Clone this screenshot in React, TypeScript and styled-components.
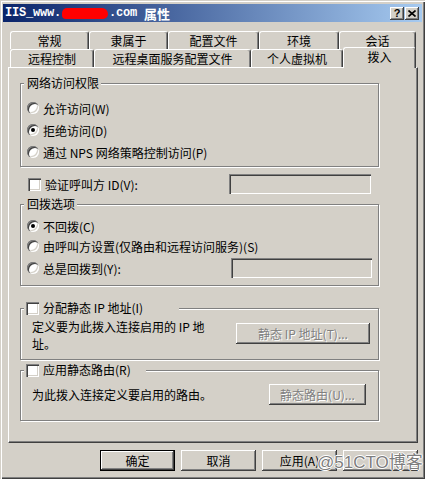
import React from "react";
import styled, { createGlobalStyle } from "styled-components";

const GlobalStyle = createGlobalStyle`
  html, body {
    margin: 0;
    padding: 0;
    background: #d4d0c8;
  }
  body {
    font-family: "Noto Sans CJK SC", "Liberation Sans", sans-serif;
    font-size: 12px;
    color: #000;
  }
  * {
    box-sizing: border-box;
  }
`;

const Window = styled.div`
  width: 425px;
  height: 479px;
  background: #d4d0c8;
  padding: 4px 3px 3px 3px;
  display: flex;
  flex-direction: column;
  box-shadow: inset 1px 1px 0 #d4d0c8, inset 2px 2px 0 #fff,
    inset -1px -1px 0 #404040, inset -2px -2px 0 #808080;
`;

const TitleBar = styled.div`
  height: 18px;
  display: flex;
  align-items: center;
  padding: 0 3px 0 2px;
  background: linear-gradient(to right, #0a246a, #a6caf0);
  color: #fff;
  font-weight: bold;
`;

const TitleText = styled.div`
  flex: 1;
  display: flex;
  align-items: center;
  font-family: "Liberation Mono", "Noto Sans CJK SC", monospace;
  font-size: 12px;
  letter-spacing: -0.2px;
  white-space: pre;
`;

const TitleCjk = styled.span`
  font-family: "Noto Sans CJK SC", sans-serif;
  font-size: 13px;
  letter-spacing: 0;
`;

const Redacted = styled.span`
  display: inline-block;
  width: 46px;
  height: 11px;
  margin: 0 1px;
  background: #ff0000;
  border-radius: 5px 6px 5px 4px;
`;

const CaptionButton = styled.div<{ $gap?: number }>`
  width: 14px;
  height: 13px;
  margin-left: ${(p) => p.$gap ?? 0}px;
  display: flex;
  align-items: center;
  justify-content: center;
  background: #d4d0c8;
  color: #000;
  font: bold 11px "Liberation Sans", sans-serif;
  box-shadow: inset -1px -1px 0 #404040, inset 1px 1px 0 #fff,
    inset -2px -2px 0 #808080;
`;

const TabStrip = styled.div`
  margin: 9px 0 0 7px;
  display: flex;
  flex-direction: column;
`;

const TabRow = styled.div`
  height: 18px;
  display: flex;
  align-items: flex-end;
`;

const Tab = styled.div<{ $w: number; $active?: boolean }>`
  width: ${(p) => p.$w}px;
  height: ${(p) => (p.$active ? 21 : 18)}px;
  margin-bottom: ${(p) => (p.$active ? -1 : 0)}px;
  position: ${(p) => (p.$active ? "relative" : "static")};
  z-index: ${(p) => (p.$active ? 1 : "auto")};
  display: flex;
  align-items: ${(p) => (p.$active ? "flex-start" : "center")};
  padding-top: ${(p) => (p.$active ? 2 : 0)}px;
  justify-content: center;
  background: #d4d0c8;
  border-top: 1px solid #fff;
  border-left: 1px solid #fff;
  border-right: 1px solid #404040;
  border-radius: 3px 3px 0 0;
  box-shadow: inset -1px 0 0 #808080;
  line-height: 14px;
`;

const Panel = styled.div`
  width: 410px;
  height: 376px;
  margin-left: 5px;
  padding-left: 11px;
  border-top: 1px solid #fff;
  border-left: 1px solid #fff;
  border-right: 1px solid #404040;
  border-bottom: 1px solid #404040;
  box-shadow: inset -1px -1px 0 #808080;
  display: flex;
  flex-direction: column;
`;

const Group = styled.div<{ $top: number; $h: number }>`
  width: 359px;
  height: ${(p) => p.$h}px;
  margin-top: ${(p) => p.$top}px;
  border: 1px solid #808080;
  box-shadow: 1px 1px 0 #fff, inset 1px 1px 0 #fff;
  display: flex;
  flex-direction: column;
`;

const Legend = styled.div<{ $w?: number; $pl?: number }>`
  align-self: flex-start;
  height: 14px;
  margin: -8px 0 0 3px;
  padding: 0 2px 0 ${(p) => p.$pl ?? 3}px;
  width: ${(p) => (p.$w ? `${p.$w}px` : "auto")};
  display: flex;
  align-items: center;
  gap: 4px;
  background: #d4d0c8;
  line-height: 14px;
`;

const OptionRow = styled.div<{ $top?: number; $h: number }>`
  height: ${(p) => p.$h}px;
  margin-top: ${(p) => p.$top ?? 0}px;
  padding: 0 6px 0 6px;
  display: flex;
  align-items: center;
  gap: 4px;
`;

const Label = styled.span`
  flex: 1;
  white-space: nowrap;
`;

const Radio = styled.span<{ $on?: boolean }>`
  width: 12px;
  height: 12px;
  flex: none;
  border-radius: 50%;
  background: #fff;
  display: flex;
  align-items: center;
  justify-content: center;
  box-shadow: inset 1px 1px 0 #808080, inset 2px 2px 0 #404040,
    inset -1px -1px 0 #fff, inset -2px -2px 0 #d4d0c8;
  &::after {
    content: "";
    width: 4px;
    height: 4px;
    border-radius: 50%;
    background: ${(p) => (p.$on ? "#000" : "transparent")};
  }
`;

const Checkbox = styled.span`
  width: 13px;
  height: 13px;
  flex: none;
  background: #fff;
  box-shadow: inset 1px 1px 0 #808080, inset 2px 2px 0 #404040,
    inset -1px -1px 0 #fff, inset -2px -2px 0 #d4d0c8;
`;

const TextBox = styled.div<{ $w: number }>`
  width: ${(p) => p.$w}px;
  height: 20px;
  flex: none;
  background: #d4d0c8;
  box-shadow: inset 1px 1px 0 #808080, inset 2px 2px 0 #404040,
    inset -1px -1px 0 #fff, inset -2px -2px 0 #d4d0c8;
`;

const CheckRow = styled.div`
  width: 359px;
  height: 20px;
  margin-top: 7px;
  padding: 0 8px 0 8px;
  display: flex;
  align-items: center;
  gap: 4px;
`;

const InfoRow = styled.div<{ $top: number; $pr: number }>`
  margin-top: ${(p) => p.$top}px;
  padding: 0 ${(p) => p.$pr}px 0 11px;
  display: flex;
  align-items: flex-start;
`;

const InfoText = styled.div<{ $lh: number }>`
  flex: 1;
  line-height: ${(p) => p.$lh}px;
`;

const Button = styled.div<{ $w: number; $top?: number; $default?: boolean; $disabled?: boolean }>`
  width: ${(p) => p.$w}px;
  height: 21px;
  margin-top: ${(p) => p.$top ?? 0}px;
  flex: none;
  display: flex;
  align-items: center;
  justify-content: center;
  background: #d4d0c8;
  color: ${(p) => (p.$disabled ? "#808080" : "#000")};
  text-shadow: ${(p) => (p.$disabled ? "1px 1px 0 #fff" : "none")};
  border: ${(p) => (p.$default ? "1px solid #000" : "none")};
  box-shadow: inset -1px -1px 0 #404040, inset 1px 1px 0 #fff,
    inset -2px -2px 0 #808080;
  white-space: nowrap;
`;

const ButtonRow = styled.div`
  position: relative;
  width: 410px;
  height: 21px;
  margin: 7px 0 0 5px;
  display: flex;
  justify-content: flex-end;
  gap: 6px;
`;

const Watermark = styled.div`
  position: absolute;
  left: 309px;
  top: -2px;
  font-family: "Liberation Sans", "Noto Sans CJK SC", sans-serif;
  font-size: 17px;
  color: #7d7d7d;
  white-space: nowrap;
  text-shadow: 1px 0 0 #fff, -1px 0 0 #fff, 0 1px 0 #fff, 0 -1px 0 #fff;
`;

const row1 = [
  { t: "常规", w: 79 },
  { t: "隶属于", w: 79 },
  { t: "配置文件", w: 91 },
  { t: "环境", w: 80 },
  { t: "会话", w: 77 },
];

const row2 = [
  { t: "远程控制", w: 84 },
  { t: "远程桌面服务配置文件", w: 157 },
  { t: "个人虚拟机", w: 92 },
  { t: "拨入", w: 73, active: true },
];

export default function App() {
  return (
    <>
      <GlobalStyle />
      <Window>
        <TitleBar>
          <TitleText>
            IIS_www.<Redacted />.com <TitleCjk>属性</TitleCjk>
          </TitleText>
          <CaptionButton>?</CaptionButton>
          <CaptionButton $gap={1}>
            <svg width="8" height="7" viewBox="0 0 8 7">
              <path d="M0.5 0.5 L7.5 6.5 M7.5 0.5 L0.5 6.5" stroke="#000" strokeWidth="1.6" />
            </svg>
          </CaptionButton>
        </TitleBar>

        <TabStrip>
          <TabRow>
            {row1.map((t) => (
              <Tab key={t.t} $w={t.w}>
                {t.t}
              </Tab>
            ))}
          </TabRow>
          <TabRow>
            {row2.map((t) => (
              <Tab key={t.t} $w={t.w} $active={t.active}>
                {t.t}
              </Tab>
            ))}
          </TabRow>
        </TabStrip>

        <Panel>
          <Group $top={15} $h={84}>
            <Legend>网络访问权限</Legend>
            <OptionRow $top={7} $h={22}>
              <Radio />
              <Label>允许访问(W)</Label>
            </OptionRow>
            <OptionRow $h={22}>
              <Radio $on />
              <Label>拒绝访问(D)</Label>
            </OptionRow>
            <OptionRow $h={22}>
              <Radio />
              <Label>通过 NPS 网络策略控制访问(P)</Label>
            </OptionRow>
          </Group>

          <CheckRow>
            <Checkbox />
            <Label>验证呼叫方 ID(V):</Label>
            <TextBox $w={142} />
          </CheckRow>

          <Group $top={10} $h={82}>
            <Legend>回拨选项</Legend>
            <OptionRow $top={5} $h={20}>
              <Radio $on />
              <Label>不回拨(C)</Label>
            </OptionRow>
            <OptionRow $h={20}>
              <Radio />
              <Label>由呼叫方设置(仅路由和远程访问服务)(S)</Label>
            </OptionRow>
            <OptionRow $top={2} $h={20}>
              <Radio />
              <Label>总是回拨到(Y):</Label>
              <TextBox $w={141} />
            </OptionRow>
          </Group>

          <Group $top={22} $h={52}>
            <Legend $w={155} $pl={2}>
              <Checkbox />
              分配静态 IP 地址(I)
            </Legend>
            <InfoRow $top={3} $pr={8}>
              <InfoText $lh={17}>
                定义要为此拨入连接启用的 IP 地
                <br />
                址。
              </InfoText>
              <Button $w={134} $top={5} $disabled>
                静态 IP 地址(T)...
              </Button>
            </InfoRow>
          </Group>

          <Group $top={10} $h={51}>
            <Legend $w={122} $pl={2}>
              <Checkbox />
              应用静态路由(R)
            </Legend>
            <InfoRow $top={7} $pr={12}>
              <InfoText $lh={21}>为此拨入连接定义要启用的路由。</InfoText>
              <Button $w={97} $disabled>
                静态路由(U)...
              </Button>
            </InfoRow>
          </Group>
        </Panel>

        <ButtonRow>
          <Button $w={75} $default>
            确定
          </Button>
          <Button $w={75}>取消</Button>
          <Button $w={75}>应用(A)</Button>
          <Button $w={75} />
          <Watermark>@51CTO博客</Watermark>
        </ButtonRow>
      </Window>
    </>
  );
}
